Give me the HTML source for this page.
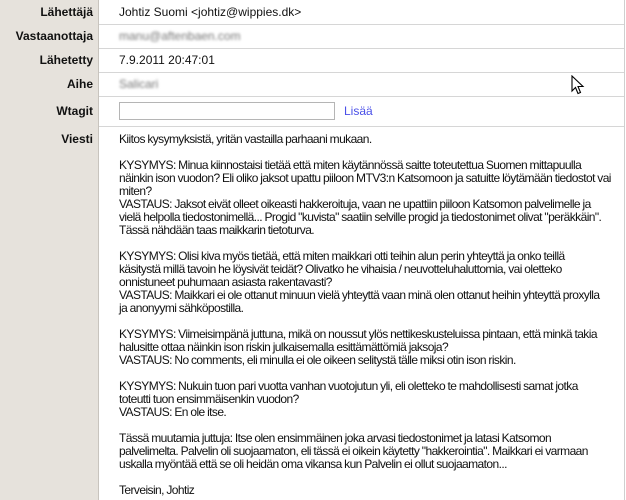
<!DOCTYPE html>
<html><head><meta charset="utf-8"><style>
body{margin:0;width:626px;height:500px;overflow:hidden;background:#fff;font-family:"Liberation Sans",Arial,sans-serif;font-size:12px;color:#111;position:relative}
.left{position:absolute;left:0;top:0;width:98px;height:500px;background:#e6e2dc;border-right:1px solid #c8c4be}
.rb{position:absolute;left:624px;top:0;width:1px;height:500px;background:#cfcfcf}
.hl{position:absolute;left:99px;width:525px;height:1px;background:#d6d6d6}
.lab{position:absolute;right:533px;font-weight:bold;line-height:14px}
.val{position:absolute;left:119px;line-height:14px;white-space:nowrap}
.blur{color:#777;filter:blur(1.3px)}
.inp{position:absolute;left:119px;top:102px;width:216px;height:18px;border:1px solid #b5b5b5;box-sizing:border-box}
.lnk{position:absolute;left:344px;top:104px;color:#4a50e8;line-height:14px}
.msg{position:absolute;left:119px;top:133px;width:500px;letter-spacing:-0.58px;word-spacing:-0.3px}
.msg div{height:13px;line-height:13px;white-space:nowrap;overflow:visible}
</style></head><body>
<div class="left"></div><div class="rb"></div>
<div class="hl" style="top:24px"></div>
<div class="hl" style="top:48px"></div>
<div class="hl" style="top:72px"></div>
<div class="hl" style="top:96px"></div>
<div class="hl" style="top:126px"></div>
<div class="lab" style="top:5px">Lähettäjä</div>
<div class="lab" style="top:29px">Vastaanottaja</div>
<div class="lab" style="top:53px">Lähetetty</div>
<div class="lab" style="top:77px">Aihe</div>
<div class="lab" style="top:104px">Wtagit</div>
<div class="lab" style="top:132px">Viesti</div>
<div class="val" style="top:5px">Johtiz Suomi &lt;johtiz@wippies.dk&gt;</div>
<div class="val blur" style="top:29px">manu@aftenbaen.com</div>
<div class="val" style="top:53px">7.9.2011 20:47:01</div>
<div class="val blur" style="top:77px">Salicari</div>
<div class="inp"></div><div class="lnk">Lisää</div>
<svg style="position:absolute;left:571px;top:75px" width="14" height="21" viewBox="0 0 14 21"><path d="M1 1 L1 16 L4.5 12.5 L7 18.5 L9.5 17.5 L7 11.5 L12 11.5 Z" fill="#fff" stroke="#000" stroke-width="1.1"/></svg>
<div class="msg">
<div>Kiitos kysymyksistä, yritän vastailla parhaani mukaan.</div><div></div>
<div>KYSYMYS: Minua kiinnostaisi tietää että miten käytännössä saitte toteutettua Suomen mittapuulla</div>
<div>näinkin ison vuodon? Eli oliko jaksot upattu piiloon MTV3:n Katsomoon ja satuitte löytämään tiedostot vai</div>
<div>miten?</div>
<div>VASTAUS: Jaksot eivät olleet oikeasti hakkeroituja, vaan ne upattiin piiloon Katsomon palvelimelle ja</div>
<div>vielä helpolla tiedostonimellä... Progid "kuvista" saatiin selville progid ja tiedostonimet olivat "peräkkäin".</div>
<div>Tässä nähdään taas maikkarin tietoturva.</div><div></div>
<div>KYSYMYS: Olisi kiva myös tietää, että miten maikkari otti teihin alun perin yhteyttä ja onko teillä</div>
<div>käsitystä millä tavoin he löysivät teidät? Olivatko he vihaisia / neuvotteluhaluttomia, vai oletteko</div>
<div>onnistuneet puhumaan asiasta rakentavasti?</div>
<div>VASTAUS: Maikkari ei ole ottanut minuun vielä yhteyttä vaan minä olen ottanut heihin yhteyttä proxylla</div>
<div>ja anonyymi sähköpostilla.</div><div></div>
<div>KYSYMYS: Viimeisimpänä juttuna, mikä on noussut ylös nettikeskusteluissa pintaan, että minkä takia</div>
<div>halusitte ottaa näinkin ison riskin julkaisemalla esittämättömiä jaksoja?</div>
<div>VASTAUS: No comments, eli minulla ei ole oikeen selitystä tälle miksi otin ison riskin.</div><div></div>
<div>KYSYMYS: Nukuin tuon pari vuotta vanhan vuotojutun yli, eli oletteko te mahdollisesti samat jotka</div>
<div>toteutti tuon ensimmäisenkin vuodon?</div>
<div>VASTAUS: En ole itse.</div><div></div>
<div>Tässä muutamia juttuja: Itse olen ensimmäinen joka arvasi tiedostonimet ja latasi Katsomon</div>
<div>palvelimelta. Palvelin oli suojaamaton, eli tässä ei oikein käytetty "hakkerointia". Maikkari ei varmaan</div>
<div>uskalla myöntää että se oli heidän oma vikansa kun Palvelin ei ollut suojaamaton...</div><div></div>
<div>Terveisin, Johtiz</div>
</div>
</body></html>
